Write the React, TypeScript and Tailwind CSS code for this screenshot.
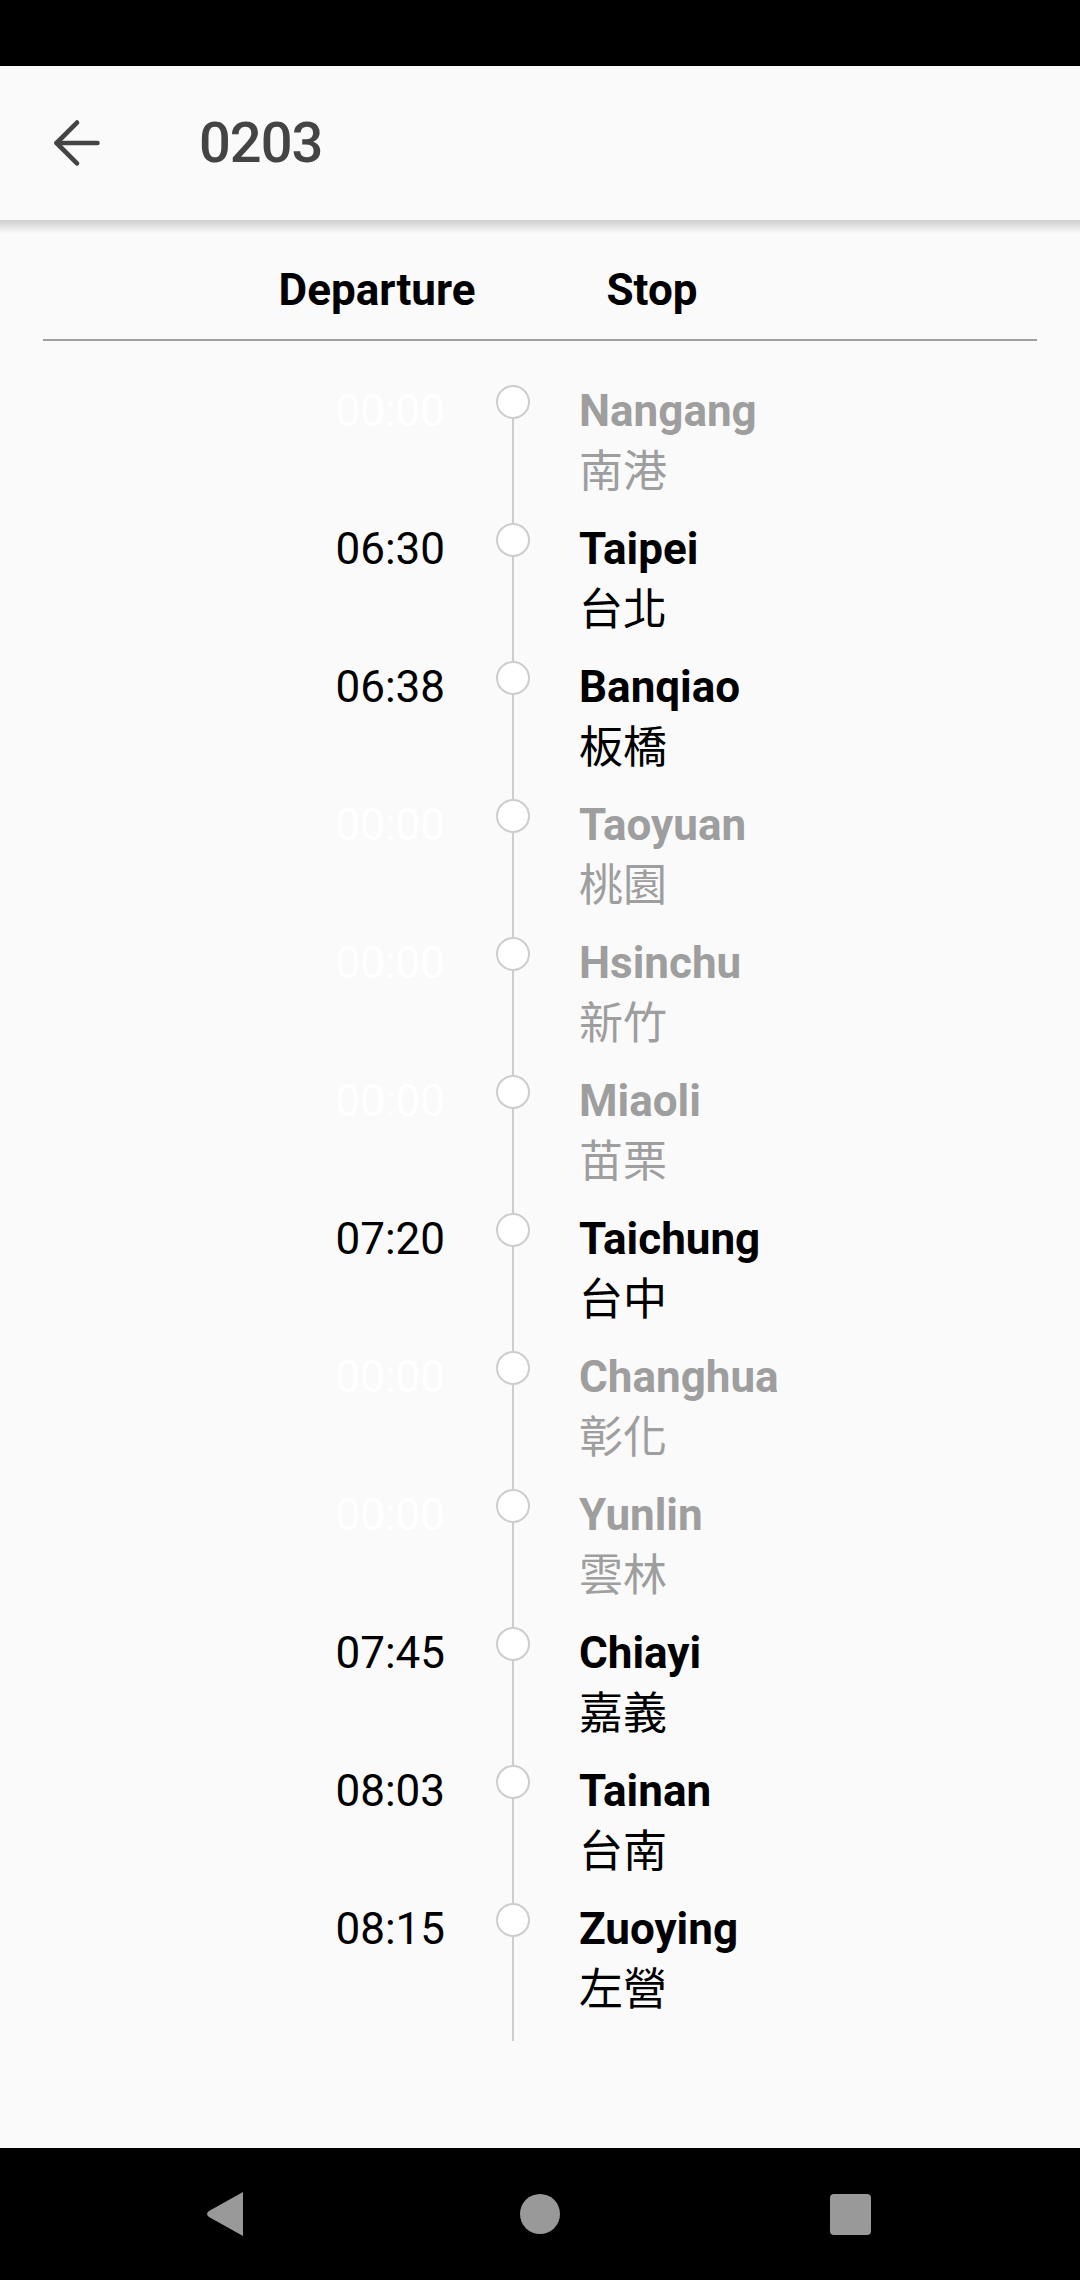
import { ArrowLeft } from 'lucide-react';

interface Stop {
  time: string;
  en: string;
  zh: string;
  stops: boolean;
}

const STOPS: Stop[] = [
  { time: '00:00', en: 'Nangang', zh: '南港', stops: false },
  { time: '06:30', en: 'Taipei', zh: '台北', stops: true },
  { time: '06:38', en: 'Banqiao', zh: '板橋', stops: true },
  { time: '00:00', en: 'Taoyuan', zh: '桃園', stops: false },
  { time: '00:00', en: 'Hsinchu', zh: '新竹', stops: false },
  { time: '00:00', en: 'Miaoli', zh: '苗栗', stops: false },
  { time: '07:20', en: 'Taichung', zh: '台中', stops: true },
  { time: '00:00', en: 'Changhua', zh: '彰化', stops: false },
  { time: '00:00', en: 'Yunlin', zh: '雲林', stops: false },
  { time: '07:45', en: 'Chiayi', zh: '嘉義', stops: true },
  { time: '08:03', en: 'Tainan', zh: '台南', stops: true },
  { time: '08:15', en: 'Zuoying', zh: '左營', stops: true },
];

function StopRow({ stop }: { stop: Stop }) {
  return (
    <div className="flex h-[138px]">
      <div className={`w-[445px] text-right text-[44px] leading-[52px] ${stop.stops ? 'text-black' : 'text-white'}`}>{stop.time}</div>
      <div className="flex w-[134px] flex-col items-center pl-[1px]">
        <div className="h-[34px] w-[34px] shrink-0 rounded-full border-2 border-[#cdcdcd] bg-white" />
        <div className="w-[2px] flex-1 bg-[#cdcdcd]" />
      </div>
      <div className={stop.stops ? 'text-black' : 'text-[#9e9e9e]'}>
        <div className="text-[44px] font-bold leading-[52px]">{stop.en}</div>
        <div className="mt-[5px] text-[44px] leading-[60px]">{stop.zh}</div>
      </div>
    </div>
  );
}

export default function App() {
  return (
    <div className="flex h-[2280px] w-[1080px] flex-col bg-[#fafafa] font-['Roboto','Noto_Sans_CJK_TC',sans-serif]">
      <div className="h-[66px] bg-black" />

      <header className="flex h-[154px] items-center bg-[#fafafa] pl-[42px]">
        <ArrowLeft className="h-[70px] w-[70px] text-[#444444]" strokeWidth={1.6} />
        <div className="ml-[87px] text-[56px] font-medium tracking-[-1px] text-[#444444]">0203</div>
      </header>
      <div className="h-[13px] bg-gradient-to-b from-[#cecece] to-[#f8f8f8]" />

      <main className="flex-1">
        <div className="flex pt-[31px] text-[44px] font-bold leading-[52px] text-black">
          <div className="ml-[227px] w-[300px] text-center">Departure</div>
          <div className="ml-[25px] w-[200px] text-center">Stop</div>
        </div>
        <div className="mx-[43px] mt-[23px] h-[2px] bg-[#9e9e9e]" />

        <div className="mt-[44px]">
          {STOPS.map((s) => (
            <StopRow key={s.en} stop={s} />
          ))}
        </div>
      </main>

      <nav className="flex h-[132px] items-center justify-center bg-black">
        <svg width="40" height="46" viewBox="0 0 40 46" className="absolute left-[205px]">
          <path d="M38 1 L38 45 L4 26 Q0 23 4 20 Z" fill="#999999" />
        </svg>
        <div className="h-[40px] w-[40px] rounded-full bg-[#999999]" />
        <div className="absolute left-[830px] h-[41px] w-[41px] rounded-[4px] bg-[#999999]" />
      </nav>
    </div>
  );
}
